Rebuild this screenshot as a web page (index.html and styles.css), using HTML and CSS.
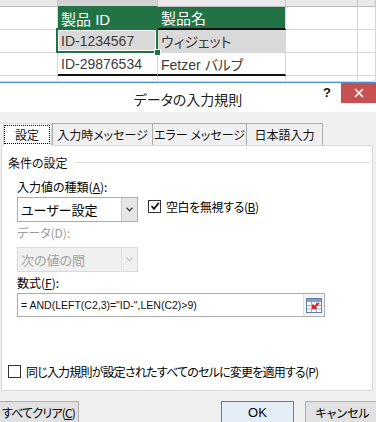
FILE: index.html
```html
<!DOCTYPE html>
<html lang="ja">
<head>
    <meta charset="UTF-8">
    <title>データの入力規則</title>
    <link rel="stylesheet" href="styles.css">
</head>
<body>
    <div class="sheet">
        <div class="col-hdr"></div>
        <div class="col-hdr on"></div>
        <div class="col-hdr"></div>
        <div class="col-hdr"></div>
        <div class="col-hdr"></div>

        <div class="cell"></div>
        <div class="cell head">製品 ID</div>
        <div class="cell head under">製品名</div>
        <div class="cell"></div>
        <div class="cell"></div>

        <div class="cell"></div>
        <div class="cell shade selected">ID-1234567</div>
        <div class="cell shade">ウィジェット</div>
        <div class="cell"></div>
        <div class="cell"></div>

        <div class="cell"></div>
        <div class="cell thick">ID-29876534</div>
        <div class="cell thick">Fetzer バルブ</div>
        <div class="cell"></div>
        <div class="cell"></div>

        <div class="cell"></div>
        <div class="cell"></div>
        <div class="cell"></div>
        <div class="cell"></div>
        <div class="cell"></div>
    </div>

    <div class="dialog">
        <div class="titlebar">
            <div></div>
            <div class="title">データの入力規則</div>
            <div class="title-btns">
                <span class="help">?</span>
                <span class="close">
                    <svg width="10" height="10" viewBox="0 0 10 10">
                        <path d="M1 1 L9 9 M9 1 L1 9" stroke="#fff" stroke-width="1.6"/>
                    </svg>
                </span>
            </div>
        </div>

        <div class="dlg-body">
            <div class="tabs">
                <div class="tab on"><span class="focus">設定</span></div>
                <div class="tab t2">入力時メッセージ</div>
                <div class="tab t3">エラー メッセージ</div>
                <div class="tab t4">日本語入力</div>
            </div>

            <div class="panel">
                <div class="group">条件の設定</div>

                <div class="lbl">入力値の種類(<u>A</u>):</div>
                <div class="row">
                    <div class="combo">
                        <span class="combo-text">ユーザー設定</span>
                        <span class="arrow">
                            <svg width="7" height="5" viewBox="0 0 7 5">
                                <path d="M0.5 0.8 L3.5 3.8 L6.5 0.8" fill="none" stroke="#444" stroke-width="1.3"/>
                            </svg>
                        </span>
                    </div>
                    <label class="check">
                        <span class="box">
                            <svg width="10" height="10" viewBox="0 0 10 10">
                                <path d="M1.5 5 L4 7.8 L8.8 1.8" fill="none" stroke="#111" stroke-width="1.8"/>
                            </svg>
                        </span>
                        <span class="narrow">空白を無視する(<u>B</u>)</span>
                    </label>
                </div>

                <div class="lbl dim">データ(D):</div>
                <div class="row">
                    <div class="combo disabled">
                        <span class="combo-text">次の値の間</span>
                        <span class="arrow">
                            <svg width="7" height="5" viewBox="0 0 7 5">
                                <path d="M0.5 0.8 L3.5 3.8 L6.5 0.8" fill="none" stroke="#c4c4c4" stroke-width="1.3"/>
                            </svg>
                        </span>
                    </div>
                </div>

                <div class="lbl">数式(<u>F</u>):</div>
                <div class="formula">
                    <span class="formula-text">= AND(LEFT(C2,3)="ID-",LEN(C2)&gt;9)</span>
                    <span class="ref-btn">
                        <svg width="16" height="15" viewBox="0 0 16 15">
                            <rect x="0.5" y="0.5" width="15" height="14" fill="#fff" stroke="#5b7fa8"/>
                            <rect x="1" y="1" width="14" height="3" fill="#7aa3cf"/>
                            <path d="M1 7.5 H15 M1 11 H15 M5.5 4 V14 M10.5 4 V14" stroke="#8fb0d6" stroke-width="1"/>
                            <path d="M13 5 L7.5 9.5 M7 6.5 V10 H10.5" fill="none" stroke="#d9282a" stroke-width="2"/>
                        </svg>
                    </span>
                </div>

                <label class="check apply">
                    <span class="box"></span>
                    <span class="narrower">同じ入力規則が設定されたすべてのセルに変更を適用する(P)</span>
                </label>
            </div>

            <div class="buttons">
                <button class="btn clear">すべてクリア(<u>C</u>)</button>
                <button class="btn ok">OK</button>
                <button class="btn cancel">キャンセル</button>
            </div>
        </div>
    </div>
</body>
</html>
```

FILE: styles.css
```css
body {
    margin: 0;
    width: 376px;
    height: 422px;
    overflow: hidden;
    background: #fff;
    font-family: "Noto Sans CJK JP", sans-serif;
    font-feature-settings: "palt";
}

/* spreadsheet behind the dialog */

.sheet {
    display: grid;
    grid-template-columns: 58px 100px 128px 72px 1fr;
    grid-template-rows: 7px 23px 23px 23px 6px;
    font-family: "Liberation Sans", "Noto Sans CJK JP", sans-serif;
    font-size: 14px;
    color: #3c3c3c;
}

.col-hdr {
    background: #e9e9e9;
    border-right: 1px solid #c6c6c6;
    border-bottom: 1px solid #bdbdbd;
}

.col-hdr.on {
    background: #d2d2d2;
    border-bottom-color: #217346;
}

.cell {
    box-sizing: border-box;
    border-right: 1px solid #d6d6d6;
    border-bottom: 1px solid #d6d6d6;
    padding-left: 3px;
    display: flex;
    align-items: center;
    white-space: nowrap;
}

.cell.head {
    background: #217346;
    border-right-color: #217346;
    border-bottom-color: #217346;
    color: #fff;
    font-size: 15px;
}

.cell.head.under {
    border-right-color: #d6d6d6;
    border-bottom: 2px solid #111;
}

.cell.shade {
    background: #d9d9d9;
}

.cell.thick {
    border-bottom: 2px solid #111;
}

.cell.selected {
    position: relative;
}

.cell.selected::after {
    content: "";
    position: absolute;
    left: -2px;
    top: -2px;
    right: -1px;
    bottom: -1px;
    border: 2px solid #217346;
    box-shadow: inset 0 0 0 1px #fff;
}

.cell.selected::before {
    content: "";
    position: absolute;
    right: -4px;
    bottom: -4px;
    width: 5px;
    height: 5px;
    background: #217346;
    border: 1px solid #fff;
    z-index: 1;
}

/* dialog */

.dialog {
    border-top: 1px solid #4d8fd6;
    font-size: 12px;
    color: #000;
}

.titlebar {
    display: grid;
    grid-template-columns: 1fr auto 1fr;
    height: 29px;
    background: #fff;
}

.title {
    align-self: end;
    padding-bottom: 3px;
    font-size: 14px;
    color: #222;
}

.title-btns {
    display: flex;
    justify-content: flex-end;
    align-items: flex-start;
}

.help {
    font-family: "Liberation Sans", sans-serif;
    font-weight: 700;
    font-size: 13px;
    line-height: 13px;
    margin: 3px 10px 0 0;
    color: #111;
}

.close {
    width: 35px;
    height: 20px;
    background: #c75050;
    display: flex;
    align-items: center;
    justify-content: center;
}

.dlg-body {
    background: #f0f0f0;
    padding-top: 11px;
}

.tabs {
    display: flex;
    height: 22px;
    padding-left: 3px;
    position: relative;
    z-index: 1;
}

.tab {
    box-sizing: border-box;
    height: 22px;
    border: 1px solid #acacac;
    border-bottom: 0;
    background: #f0f0f0;
    display: flex;
    align-items: center;
    justify-content: center;
    white-space: nowrap;
    color: #111;
}

.tab.on {
    width: 49px;
    height: 23px;
    background: #fff;
    border-color: #d9d9d9;
    padding: 1px 1px 2px 0;
}

.tab.on .focus {
    align-self: stretch;
    flex: 1;
    border: 1px dotted #000;
    display: flex;
    align-items: center;
    justify-content: center;
}

.tab.t2 { width: 101px; }
.tab.t3 { width: 95px; margin-left: -1px; }
.tab.t4 { width: 77px; margin-left: -1px; }

.panel {
    box-sizing: border-box;
    height: 246px;
    margin: 0 3px 0 1px;
    background: #fff;
    border: 1px solid #d9d9d9;
}

.group {
    display: flex;
    align-items: center;
    height: 16px;
    margin-top: 8px;
    padding-left: 6px;
    color: #111;
}

.group::after {
    content: "";
    flex: 1;
    height: 1px;
    background: #dcdcdc;
    margin: 0 2px 0 7px;
}

.lbl {
    height: 16px;
    line-height: 16px;
    margin: 9px 0 0 15px;
}

.lbl.dim {
    margin-top: 3px;
    color: #9d9d9d;
}

.lbl.dim + .row {
    margin-top: 6px;
}

.row {
    display: flex;
    margin: 2px 0 0 15px;
}

.combo {
    box-sizing: border-box;
    width: 121px;
    height: 25px;
    border: 1px solid #acacac;
    background: #fff;
    display: flex;
}

.combo-text {
    flex: 1;
    display: flex;
    align-items: center;
    padding-left: 3px;
    font-size: 13px;
}

.arrow {
    width: 15px;
    display: flex;
    align-items: center;
    justify-content: center;
    background: #e6e6e6;
    border-left: 1px solid #c9c9c9;
}

.combo.disabled {
    background: #f0f0f0;
    border-color: #d9d9d9;
    color: #a3a3a3;
}

.combo.disabled .arrow {
    background: #f0f0f0;
    border-left-color: #e2e2e2;
}

.lbl + .row + .lbl {
    margin-top: 3px;
}

.check {
    display: flex;
    align-items: center;
    height: 14px;
    margin: 2px 0 0 10px;
    white-space: nowrap;
}

.narrow {
    letter-spacing: -0.4px;
}

.narrower {
    letter-spacing: -0.8px;
}

.box {
    box-sizing: border-box;
    width: 13px;
    height: 13px;
    border: 1px solid #333;
    background: #fff;
    margin-right: 5px;
    display: flex;
    align-items: center;
    justify-content: center;
}

.formula {
    box-sizing: border-box;
    width: 308px;
    height: 24px;
    margin: 2px 0 0 15px;
    border: 1px solid #acacac;
    display: flex;
}

.formula-text {
    flex: 1;
    display: flex;
    align-items: center;
    padding-left: 3px;
    font-family: "Liberation Sans", sans-serif;
    font-size: 10.5px;
    color: #111;
}

.ref-btn {
    width: 20px;
    display: flex;
    align-items: center;
    justify-content: center;
    background: #f4f4f4;
    border-left: 1px solid #e0e0e0;
}

.check.apply {
    height: 16px;
    margin: 46px 0 0 6px;
}

.buttons {
    display: flex;
    margin-top: 10px;
}

.btn {
    box-sizing: border-box;
    height: 23px;
    padding: 0;
    border: 1px solid #adadad;
    background: #e1e1e1;
    font-family: "Noto Sans CJK JP", sans-serif;
    font-feature-settings: "palt";
    font-size: 12px;
    color: #000;
    white-space: nowrap;
}

.btn.clear {
    width: 81px;
    margin-left: -2px;
    letter-spacing: -0.8px;
}

.btn.ok {
    width: 73px;
    margin-left: auto;
    border-color: #3c8ad8;
    background: #e5eef7;
    font-family: "Liberation Sans", sans-serif;
    font-size: 13px;
}

.btn.cancel {
    width: 75px;
    margin: 0 -4px 0 11px;
}
```
